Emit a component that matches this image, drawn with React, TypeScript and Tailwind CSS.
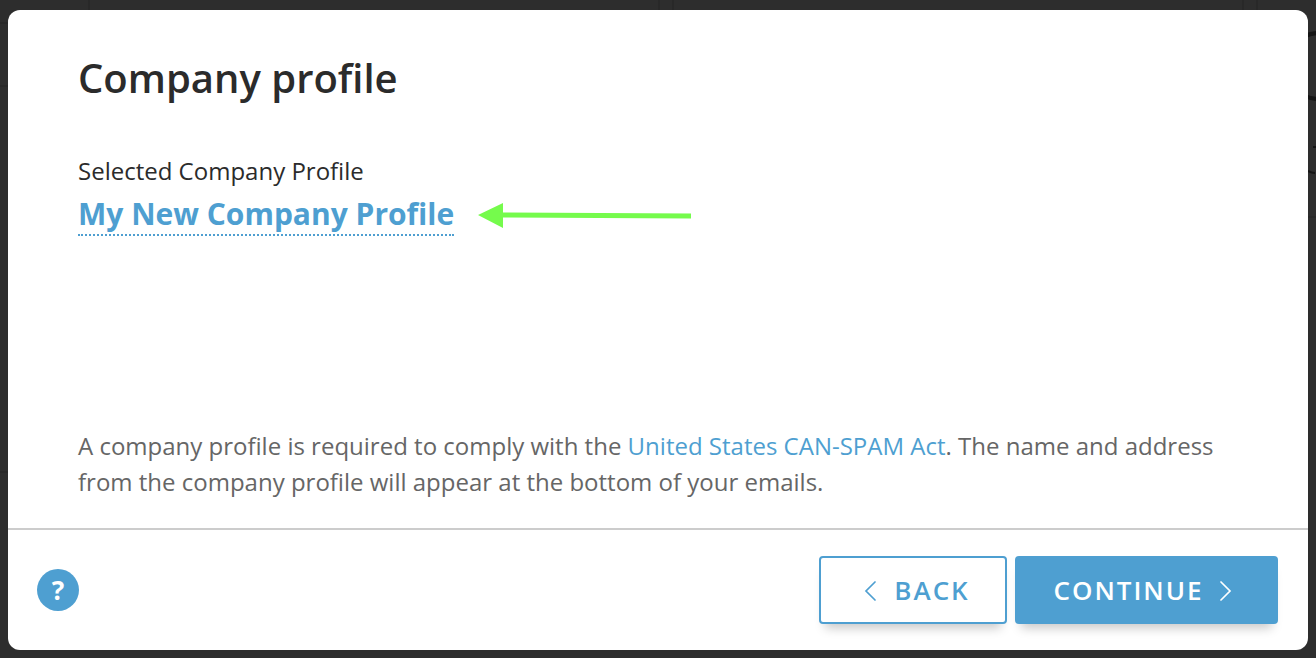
export default function App() {
  return (
    <main className="relative isolate flex min-h-screen bg-[#2d2d2d] px-2 pt-2.5 pb-2 font-['Open_Sans',sans-serif]">
      <svg className="absolute inset-0 -z-10 size-full" viewBox="0 0 1316 658" preserveAspectRatio="none" fill="none" aria-hidden="true">
        <path d="M89 0v10M659 0v10M673 0v10M1243 0v10M1257 0v10M0 23h8M0 86h8M0 472h8M1308 217h8" stroke="#282828" strokeWidth="2" />
        <circle cx="1319" cy="66" r="33" stroke="#141414" strokeWidth="4" />
        <path d="M1313 147h3M1308 171q4 2 7 2" stroke="#141414" strokeWidth="2" />
      </svg>
      <section role="dialog" aria-labelledby="title" className="flex flex-1 flex-col rounded-xl bg-white">
        <div className="flex flex-1 flex-col px-[70px] pt-10 pb-7">
          <h1 id="title" className="text-[40px] leading-[56px] font-semibold text-[#2b2b2b]">Company profile</h1>
          <p className="mt-12 text-2xl leading-[34px] text-[#2b2b2b]">Selected Company Profile</p>
          <div className="mt-1.5 flex items-center gap-6">
            <a href="#profile" className="border-b-2 border-dotted border-[#4e9fd1] text-[30px] leading-10 font-bold text-[#4e9fd1]">
              My New Company Profile
            </a>
            <svg width="214" height="28" viewBox="0 0 214 28" fill="#75fb4c" aria-hidden="true">
              <path d="M0 14 25 2v9.500l188 1v5l-188-1V27z" />
            </svg>
          </div>
          <p className="mt-auto text-2xl leading-9 text-[#666]">
            A company profile is required to comply with the{" "}
            <a href="#can-spam" className="text-[#4e9fd1]">United States CAN-SPAM Act</a>. The name and address from the
            company profile will appear at the bottom of your emails.
          </p>
        </div>
        <footer className="flex items-center justify-between border-t-2 border-[#ccc] py-[26px] pr-[30px] pl-[29px]">
          <button aria-label="Help" className="flex size-[42px] items-center justify-center rounded-full bg-[#4e9fd1] text-white">
            <span className="font-['Noto_Sans',sans-serif] text-[26px] leading-[42px] font-bold">?</span>
          </button>
          <div className="flex gap-2">
            <button className="flex h-[68px] w-[188px] items-center justify-center gap-4 rounded-sm border-2 border-[#4e9fd1] bg-white pl-2 text-[26px] font-semibold tracking-[2px] text-[#4e9fd1] shadow-[0_10px_10px_-6px_rgba(0,0,0,0.22)]">
              <svg width="14" height="20" viewBox="0 0 14 20" fill="none" stroke="currentColor" strokeWidth="1.7" strokeLinecap="round" aria-hidden="true" className="mt-0.5">
                <path d="M11 1 2 10l9 9" />
              </svg>
              BACK
            </button>
            <button className="flex h-[68px] w-[263px] items-center justify-center gap-3.5 rounded-sm bg-[#4e9fd1] pr-2 text-[26px] font-semibold tracking-[2px] text-white shadow-[0_10px_10px_-6px_rgba(0,0,0,0.22)]">
              CONTINUE
              <svg width="14" height="20" viewBox="0 0 14 20" fill="none" stroke="currentColor" strokeWidth="1.7" strokeLinecap="round" aria-hidden="true" className="mt-0.5">
                <path d="m3 1 9 9-9 9" />
              </svg>
            </button>
          </div>
        </footer>
      </section>
    </main>
  );
}
